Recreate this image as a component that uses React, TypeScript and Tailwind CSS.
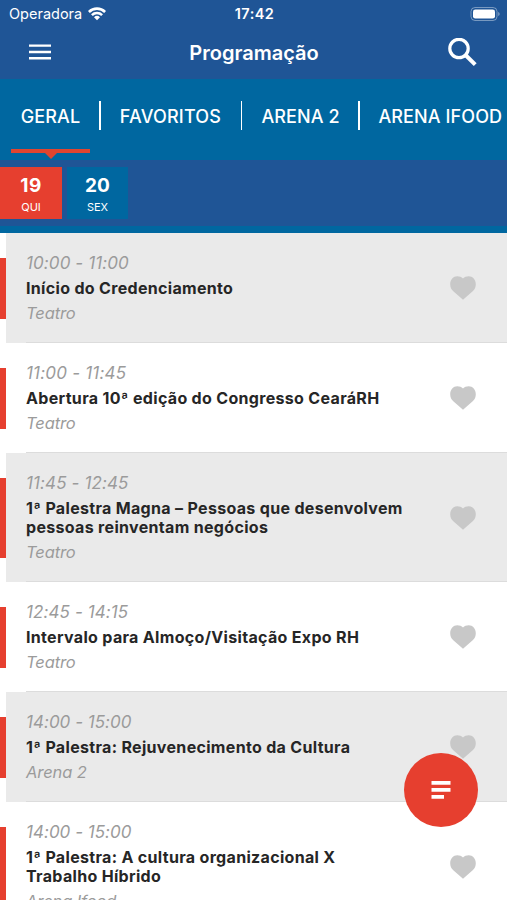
import React from "react";

type Session = { time: string; title: string[]; place: string; timeClass: string };

const sessions: Session[] = [
  { time: "10:00 - 11:00", title: ["Início do Credenciamento"], place: "Teatro", timeClass: "tracking-[0.1px]" },
  { time: "11:00 - 11:45", title: ["Abertura 10ª edição do Congresso CearáRH"], place: "Teatro", timeClass: "tracking-[0.2px]" },
  { time: "11:45 - 12:45", title: ["1ª Palestra Magna – Pessoas que desenvolvem", "pessoas reinventam negócios"], place: "Teatro", timeClass: "tracking-[0.12px]" },
  { time: "12:45 - 14:15", title: ["Intervalo para Almoço/Visitação Expo RH"], place: "Teatro", timeClass: "tracking-[0.1px]" },
  { time: "14:00 - 15:00", title: ["1ª Palestra: Rejuvenecimento da Cultura"], place: "Arena 2", timeClass: "tracking-[0.02px]" },
  { time: "14:00 - 15:00", title: ["1ª Palestra: A cultura organizacional X", "Trabalho Híbrido"], place: "Arena Ifood", timeClass: "tracking-[0.02px]" },
];

function Heart() {
  return (
    <svg className="h-6 w-[26px] shrink-0 fill-[#c8c8c8]" viewBox="0 0 26 24">
      <path d="M13 23.800 3.300 15.300C1.200 13.300 0.200 11.200 0.200 8.200 0.200 3.600 3.300 0.300 7.300 0.300 9.600 0.300 11.600 1.100 13 2.500 14.400 1.100 16.400 0.300 18.700 0.300c4 0 7.100 3.300 7.100 7.900 0 3-1 5.100-3.100 7.100Z" />
    </svg>
  );
}

function StatusBar() {
  return (
    <div className="grid h-7 grid-cols-3 items-center pl-[9px] pr-[7px] text-[14.500px]">
      <div className="flex items-center gap-[6px]">
        <span className="w-[73px]">Operadora</span>
        <svg className="h-[14px] w-[18px] fill-white" viewBox="0 0 18 14">
          <path d="M0 4.100a12.700 12.700 0 0 1 18 0L16.200 5.900a10.200 10.200 0 0 0-14.400 0Z" />
          <path d="M3 7.200a8.500 8.500 0 0 1 12 0L13.200 9a5.900 5.900 0 0 0-8.400 0Z" />
          <path d="M6 10.300a4.300 4.300 0 0 1 6 0L9 13.300Z" />
        </svg>
      </div>
      <span className="text-center font-semibold tracking-[0.4px]">17:42</span>
      <svg className="h-[15px] w-[30px] justify-self-end" viewBox="0 0 30 15">
        <rect x="1" y="0.500" width="26" height="13" rx="4" fill="none" stroke="#fff" strokeOpacity="0.400" />
        <rect x="3" y="2.500" width="22" height="9" rx="2.300" fill="#fff" />
        <path d="M28.300 5v4q1.300-.7 1.300-2t-1.300-2" fill="#fff" fillOpacity="0.500" />
      </svg>
    </div>
  );
}

function SessionRow({ item, shaded }: { item: Session; shaded: boolean }) {
  return (
    <article className="flex">
      <div className="flex w-[6px] shrink-0 py-[24.500px]">
        <div className="w-full bg-[#e63f2f]" />
      </div>
      <div className={`flex grow pl-5 ${shaded ? "bg-[#eaeaea]" : "bg-white"}`}>
        <div className="flex grow items-center justify-between border-b border-[#dcdcdc] pr-[31.500px] pt-px">
          <div className="whitespace-nowrap pb-4 pt-[17px]">
            <div className={`text-[17px] italic leading-[25px] text-[#9b9b9b] ${item.timeClass}`}>{item.time}</div>
            <div className="py-[3px] text-[16px] font-bold leading-[19px] tracking-[0.32px] text-[#262626]">
              {item.title.map((line) => (
                <div key={line}>{line}</div>
              ))}
            </div>
            <div className="text-[16.500px] italic leading-[25px] tracking-[-0.1px] text-[#9b9b9b]">{item.place}</div>
          </div>
          <Heart />
        </div>
      </div>
    </article>
  );
}

export default function App() {
  return (
    <main className="relative h-[900px] w-[507px] overflow-hidden bg-white font-['Inter','Liberation_Sans',sans-serif] text-white">
      <header className="h-[79px] bg-[#1f5596]">
        <StatusBar />
        <div className="grid h-12 grid-cols-3 items-center pl-[29px] pr-[30px]">
          <svg className="h-4 w-[22px] fill-white" viewBox="0 0 22 16">
            <path d="M0 .4h22v2.400H0ZM0 6.800h22v2.400H0ZM0 13h22v2.400H0Z" />
          </svg>
          <h1 className="pl-[2px] pt-px text-center text-[20px] font-semibold">Programação</h1>
          <svg className="h-[29px] w-[29px] justify-self-end" viewBox="0 0 29 29" fill="none" stroke="#fff" strokeWidth="3.200">
            <circle cx="11" cy="10.500" r="9.200" />
            <path d="m17.500 17 9.700 9.700" strokeWidth="4" />
          </svg>
        </div>
      </header>

      <nav className="flex h-[81px] whitespace-nowrap bg-[#0067a0] text-[18px] font-medium">
        <div className="flex w-[99px] shrink-0 flex-col items-center pl-[2px]">
          <span className="mt-[23px] pt-px leading-[28px] tracking-[0.1px]">GERAL</span>
          <div className="mt-[18px] h-[3.500px] w-[79px] shrink-0 bg-[#e0452f]" />
          <svg className="h-[6px] w-3 shrink-0 fill-[#e0452f]" viewBox="0 0 12 6">
            <path d="M0 0h12L6 6Z" />
          </svg>
        </div>
        <div className="mt-[22px] h-[29px] w-[1.500px] shrink-0 bg-white" />
        <span className="mt-6 w-[140px] shrink-0 text-center leading-[28px] tracking-[0.2px]">FAVORITOS</span>
        <div className="mt-[22px] h-[29px] w-[1.500px] shrink-0 bg-white" />
        <span className="mt-6 w-[116px] shrink-0 pl-px text-center leading-[28px] tracking-[0.1px]">ARENA 2</span>
        <div className="mt-[22px] h-[29px] w-[1.500px] shrink-0 bg-white" />
        <span className="ml-[19px] mt-6 leading-[28px] tracking-[0.1px]">ARENA IFOOD</span>
      </nav>

      <section className="flex h-[73px] gap-[5px] border-b-[7px] border-[#0067a0] bg-[#1f5596] pt-[7px]">
        <div className="flex h-[52px] w-[62px] flex-col items-center bg-[#e63f2f]">
          <span className="mt-[7px] text-[19px] font-bold leading-[24px] tracking-[0.4px]">19</span>
          <span className="text-[11px] leading-[18px]">QUI</span>
        </div>
        <div className="flex h-[52px] w-[61px] flex-col items-center bg-[#0067a0]">
          <span className="mt-[7px] text-[19px] font-bold leading-[24px] tracking-[0.2px]">20</span>
          <span className="text-[11px] leading-[18px]">SEX</span>
        </div>
      </section>

      <section>
        {sessions.map((item, index) => (
          <SessionRow key={index} item={item} shaded={index % 2 === 0} />
        ))}
      </section>

      <button className="absolute left-[404px] top-[753px] flex h-[74px] w-[74px] items-center justify-center rounded-full bg-[#e63f2f]" aria-label="Filtrar">
        <svg className="h-[18px] w-5 fill-white" viewBox="0 0 20 18">
          <path d="M.5 0h19v3.700H.5ZM.5 7h19v3.700H.5ZM.5 14h12.500v3.700H.5Z" />
        </svg>
      </button>
    </main>
  );
}
